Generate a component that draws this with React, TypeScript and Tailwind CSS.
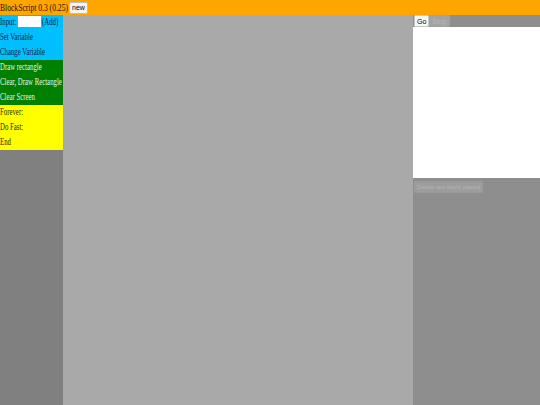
import { useState } from 'react';

type Block = { label: string; tone: 'var' | 'draw' | 'loop' };

const BLOCKS: Block[] = [
  { label: 'Set Variable', tone: 'var' },
  { label: 'Change Variable', tone: 'var' },
  { label: 'Draw rectangle', tone: 'draw' },
  { label: 'Clear, Draw Rectangle', tone: 'draw' },
  { label: 'Clear Screen', tone: 'draw' },
  { label: 'Forever:', tone: 'loop' },
  { label: 'Do Fast:', tone: 'loop' },
  { label: 'End', tone: 'loop' },
];

const toneClasses: Record<Block['tone'], string> = {
  var: 'bg-[#00bfff] text-[#14204a]',
  draw: 'bg-[#008000] text-[#e6f4e6]',
  loop: 'bg-[#ffff00] text-[#2a2a10]',
};

// the serif labels are narrow in the shot, so squeeze them horizontally
function Narrow({ children, className = '' }: { children: React.ReactNode; className?: string }) {
  return (
    <span className={`inline-block origin-left whitespace-nowrap ${className}`}>{children}</span>
  );
}

export default function App() {
  const [input, setInput] = useState('');

  return (
    <div className="flex h-[405px] w-[540px] flex-col overflow-hidden font-['Liberation_Serif',serif] text-[10px] leading-none">
      <div className="flex h-[15px] shrink-0 items-center bg-[#ffa500] text-[#1a1200]">
        <span className="w-[69px] shrink-0 overflow-visible">
          <Narrow className="scale-x-[0.76]">BlockScript 0.3 (0.25)</Narrow>
        </span>
        <button
          type="button"
          className="flex h-[12px] items-center rounded-[2px] border border-[#bcbcbc] bg-[#f4f4f4] px-[2px] font-['Liberation_Sans',sans-serif] text-[7px] text-black"
        >
          new
        </button>
      </div>

      <div className="flex flex-1">
        <div className="flex w-[63px] shrink-0 flex-col bg-[#808080]">
          <div className="flex h-[15px] items-start bg-[#00bfff] text-[#14204a]">
            <span className="mt-[2px] w-[18px] shrink-0">
              <Narrow className="scale-x-[0.68]">Input:</Narrow>
            </span>
            <input
              value={input}
              onChange={(e) => setInput(e.target.value)}
              className="mt-[1px] h-[11px] w-[23px] shrink-0 border-0 bg-white p-0 outline-none"
            />
            <span className="mt-[2px] ml-[1px] w-[20px] shrink-0">
              <Narrow className="scale-x-[0.68]">(Add)</Narrow>
            </span>
          </div>
          {BLOCKS.map((block) => (
            <div
              key={block.label}
              className={`flex h-[15px] items-start overflow-hidden pt-[2px] ${toneClasses[block.tone]}`}
            >
              <Narrow className="scale-x-[0.68]">{block.label}</Narrow>
            </div>
          ))}
        </div>

        <div className="w-[350px] shrink-0 bg-[#a9a9a9]" />

        <div className="flex flex-1 flex-col bg-[#8e8e8e] font-['Liberation_Sans',sans-serif]">
          <div className="flex h-[12px] items-stretch pl-[1px]">
            <button
              type="button"
              className="flex items-center rounded-[1px] border border-[#c8c8c8] bg-[#f6f6f6] px-[2px] text-[7px] text-black"
            >
              Go
            </button>
            <button
              type="button"
              disabled
              className="flex items-center rounded-[1px] border border-[#a0a0a0] bg-[#a3a3a3] px-[2px] text-[7px] text-[#b8b8b8]"
            >
              Stop
            </button>
          </div>
          <div className="h-[151px] bg-white" />
          <div className="flex pt-[3px] pl-[1px]">
            <button
              type="button"
              disabled
              className="flex h-[12px] items-center rounded-[1px] border border-[#9a9a9a] bg-[#9c9c9c] px-[2px] text-[6px] text-[#b4b4b4] whitespace-nowrap"
            >
              Delete last block placed
            </button>
          </div>
        </div>
      </div>
    </div>
  );
}
